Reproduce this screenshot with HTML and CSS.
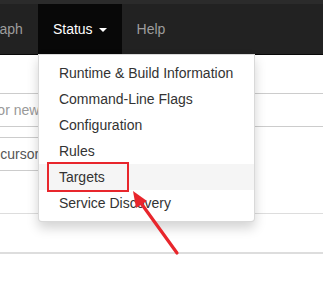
FILE: index.html
```html
<!DOCTYPE html>
<html lang="en">
<head>
    <meta charset="UTF-8">
    <title>Prometheus Time Series Collection and Processing Server</title>
    <link rel="stylesheet" href="styles.css">
</head>
<body>
    <div class="topstrip"></div>
    <nav class="navbar">
        <ul class="nav">
            <li class="nav-item"><a href="#">Graph</a></li>
            <li class="nav-item active">
                <a href="#">Status <span class="caret"></span></a>
                <ul class="dropdown">
                    <li><a href="#">Runtime &amp; Build Information</a></li>
                    <li><a href="#">Command-Line Flags</a></li>
                    <li><a href="#">Configuration</a></li>
                    <li><a href="#">Rules</a></li>
                    <li class="hover"><a href="#">Targets</a></li>
                    <li><a href="#">Service Discovery</a></li>
                </ul>
            </li>
            <li class="nav-item"><a href="#">Help</a></li>
        </ul>
    </nav>

    <div class="page">
        <div class="expression">Expression (press Shift+Enter for newlines)</div>
        <div class="metric-select">- insert metric at cursor -</div>
        <div class="tabs"></div>
        <div class="table-head"></div>
    </div>

    <div class="mark"></div>
    <svg class="arrow" width="323" height="284" viewBox="0 0 323 284">
        <line x1="177" y1="253" x2="138" y2="199" stroke="#e8262c" stroke-width="3.2" stroke-linecap="round"/>
        <polygon points="133,191 147,201 136,208" fill="#e8262c"/>
    </svg>
</body>
</html>
```

FILE: styles.css
```css
* {
    box-sizing: border-box;
}

body {
    margin: 0;
    font-family: "Liberation Sans", Arial, Helvetica, sans-serif;
    font-size: 14px;
    line-height: 20px;
    color: #333;
    background: #fff;
    overflow: hidden;
    width: 323px;
    height: 284px;
    position: relative;
}

a {
    text-decoration: none;
    color: inherit;
}

ul {
    list-style: none;
    margin: 0;
    padding: 0;
}

.topstrip {
    height: 4px;
    background: #2b2b2b;
}

.navbar {
    height: 51px;
    background: #222;
    border-bottom: 1px solid #080808;
}

.nav {
    display: flex;
    margin-left: -31px;
    white-space: nowrap;
}

.nav-item {
    position: relative;
}

.nav-item > a {
    display: block;
    padding: 15px 15px;
    height: 50px;
    color: #9d9d9d;
}

.nav-item.active > a {
    background: #080808;
    color: #fff;
}

.caret {
    display: inline-block;
    width: 0;
    height: 0;
    margin-left: 2px;
    vertical-align: middle;
    border-top: 4px solid;
    border-left: 4px solid transparent;
    border-right: 4px solid transparent;
}

.dropdown {
    position: absolute;
    top: 50px;
    left: 0;
    z-index: 10;
    padding: 5px 0;
    background: #fff;
    border: 1px solid rgba(0, 0, 0, .15);
    border-radius: 0 0 4px 4px;
    box-shadow: 0 6px 12px rgba(0, 0, 0, .175);
    white-space: nowrap;
}

.dropdown a {
    display: block;
    padding: 3px 21px 3px 20px;
    color: #333;
}

.dropdown .hover a {
    background: #f5f5f5;
}

.page {
    padding-top: 38px;
}

.expression {
    margin-left: -209px;
    margin-right: -20px;
    height: 34px;
    padding: 6px 12px;
    border: 1px solid #ccc;
    color: #999;
    white-space: nowrap;
}

.metric-select {
    margin-top: 10px;
    margin-left: -117px;
    width: 300px;
    height: 34px;
    padding: 6px 12px;
    border: 1px solid #ccc;
    color: #555;
    white-space: nowrap;
}

.tabs {
    margin-top: 42px;
    border-bottom: 1px solid #ddd;
}

.table-head {
    margin-top: 38px;
    border-bottom: 2px solid #ddd;
}

.mark {
    position: absolute;
    left: 47px;
    top: 162px;
    width: 82px;
    height: 30px;
    border: 2px solid #e8262c;
    z-index: 20;
}

.arrow {
    position: absolute;
    left: 0;
    top: 0;
    z-index: 30;
}
```
